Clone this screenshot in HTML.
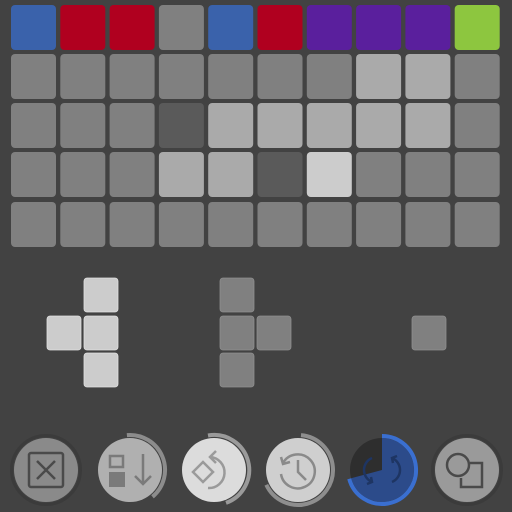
<!DOCTYPE html>
<html><head><style>
html,body{margin:0;padding:0;background:#424242;width:512px;height:512px;overflow:hidden}
</style></head><body>
<svg width="512" height="512" viewBox="0 0 512 512" xmlns="http://www.w3.org/2000/svg">
<rect width="512" height="512" fill="#424242"/>
<g id="grid"></g>
<!-- pieces -->
<g fill="#cccccc" stroke="#e0e0e0" stroke-width="0.8">
<rect x="84" y="278" width="34" height="34" rx="3"/>
<rect x="47" y="316" width="34" height="34" rx="3"/>
<rect x="84" y="316" width="34" height="34" rx="3"/>
<rect x="84" y="353" width="34" height="34" rx="3"/>
</g>
<g fill="#808080" stroke="#8e8e8e" stroke-width="0.8">
<rect x="220" y="278" width="34" height="34" rx="3"/>
<rect x="220" y="316" width="34" height="34" rx="3"/>
<rect x="257" y="316" width="34" height="34" rx="3"/>
<rect x="220" y="353" width="34" height="34" rx="3"/>
<rect x="412" y="316" width="34" height="34" rx="3"/>
</g>
<!-- button 1 -->
<circle cx="46" cy="470" r="34.5" fill="none" stroke="#3b3b3b" stroke-width="3"/>
<circle cx="46" cy="470" r="32" fill="#8a8a8a"/>
<g fill="none" stroke="#4a4a4a" stroke-width="2.5">
<rect x="29" y="453" width="34" height="34" rx="2"/>
<path d="M37 461 L55 479 M55 461 L37 479"/>
</g>
<!-- button 2 -->
<path d="M126.9 435.1 A35 35 0 0 1 152.5 496.8" fill="none" stroke="#8c8c8c" stroke-width="4"/>
<circle cx="130" cy="470" r="32" fill="#b0b0b0"/>
<g fill="none" stroke="#7a7a7a" stroke-width="2.5">
<rect x="110" y="456" width="13" height="11"/>
<path d="M143 454 V484 M135 476 L143 484 L151 476"/>
</g>
<rect x="109" y="472" width="16" height="15" fill="#7a7a7a"/>
<!-- button 3 -->
<path d="M208 435.5 A35 35 0 0 1 226 502.9" fill="none" stroke="#9a9a9a" stroke-width="4"/>
<circle cx="214" cy="470" r="32" fill="#dcdcdc"/>
<g fill="none" stroke="#9a9a9a" stroke-width="2.5">
<path d="M193 472 L203 462 L213 472 L203 482 Z"/>
<path d="M210 457 A13.5 13.5 0 1 1 208 488"/>
<path d="M216 451 L210 457 L216 463"/>
</g>
<!-- button 4 -->
<path d="M301 435.1 A35 35 0 1 1 266.3 484.8" fill="none" stroke="#8e8e8e" stroke-width="4"/>
<circle cx="298" cy="470" r="32" fill="#cfcfcf"/>
<g fill="none" stroke="#8a8a8a" stroke-width="2.5">
<path d="M283 463 A17 17 0 1 1 281 474"/>
<path d="M281 457 L283 464 L290 462"/>
<path d="M298 460 V472 L306 480"/>
</g>
<!-- button 5 -->
<circle cx="382" cy="470" r="32" fill="#2e2e2e"/>
<path d="M382 470 L382 438 A32 32 0 1 1 351.1 478.3 Z" fill="#2c4b8a"/>
<path d="M382 436 A34 34 0 1 1 349.2 478.8" fill="none" stroke="#3a6fd0" stroke-width="4"/>
<g fill="none" stroke="#1e3563" stroke-width="2.5">
<path d="M372 458 A13 13 0 0 0 372 482"/>
<path d="M392 482 A13 13 0 0 0 392 458"/>
<path d="M367 484 L372 482 L371 477"/>
<path d="M397 456 L392 458 L393 463"/>
</g>
<!-- button 6 -->
<circle cx="467" cy="470" r="34.5" fill="none" stroke="#3b3b3b" stroke-width="3"/>
<circle cx="467" cy="470" r="32" fill="#9a9a9a"/>
<g fill="none" stroke="#4a4a4a" stroke-width="2.5">
<circle cx="458" cy="465" r="11"/>
<path d="M470 463 H482 V487 H461 V478"/>
</g>
</svg>
<script>
(function(){
var rows=[
["#3a62ab","#b0001f","#b0001f","#808080","#3a62ab","#b0001f","#5a1f9d","#5a1f9d","#5a1f9d","#8dc63f"],
["#808080","#808080","#808080","#808080","#808080","#808080","#808080","#aaaaaa","#aaaaaa","#808080"],
["#808080","#808080","#808080","#5a5a5a","#aaaaaa","#aaaaaa","#aaaaaa","#aaaaaa","#aaaaaa","#808080"],
["#808080","#808080","#808080","#aaaaaa","#aaaaaa","#5a5a5a","#cccccc","#808080","#808080","#808080"],
["#808080","#808080","#808080","#808080","#808080","#808080","#808080","#808080","#808080","#808080"]];
var g=document.getElementById('grid'),ns="http://www.w3.org/2000/svg",ys=[5,54,103,152,202];
for(var r=0;r<5;r++)for(var c=0;c<10;c++){
var e=document.createElementNS(ns,'rect');
e.setAttribute('x',11+c*49.3);e.setAttribute('y',ys[r]);
e.setAttribute('width',45);e.setAttribute('height',45);e.setAttribute('rx',4);
e.setAttribute('fill',rows[r][c]);g.appendChild(e);}
})();
</script>
</body></html>
